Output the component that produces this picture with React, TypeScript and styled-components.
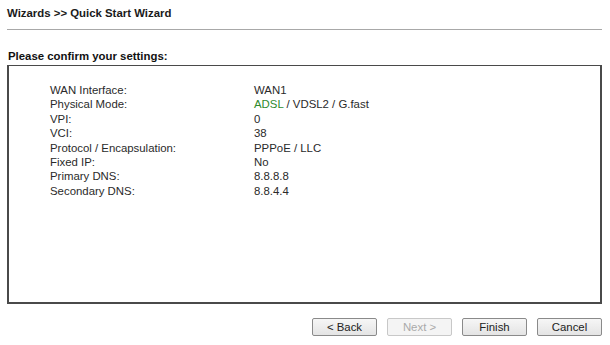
import { Fragment } from 'react'
import styled, { createGlobalStyle } from 'styled-components'

const GlobalStyle = createGlobalStyle`
  html,
  body {
    margin: 0;
    padding: 0;
    background: #fff;
  }
  body {
    font-family: 'Liberation Sans', Arial, sans-serif;
    color: #000;
  }
`

const Page = styled.div`
  width: 610px;
  height: 345px;
  padding: 5px 8px 0 7px;
  box-sizing: border-box;
  display: flex;
  flex-direction: column;
`

const Title = styled.h1`
  margin: 0;
  font-size: 11.4px;
  font-weight: bold;
  line-height: 16px;
  color: #1a1a1a;
`

const Rule = styled.hr`
  margin: 8px 0 0;
  border: 0;
  border-top: 1px solid #a8a8a8;
  height: 0;
`

const Heading = styled.h2`
  margin: 19px 0 2px 1px;
  font-size: 11.4px;
  font-weight: bold;
  line-height: 14px;
  color: #111;
`

const Panel = styled.div`
  height: 239px;
  box-sizing: border-box;
  border: 2px solid #4a4a4a;
  border-top-width: 1px;
  padding: 17px 0 0 41px;
`

const SettingsTable = styled.div`
  display: grid;
  grid-template-columns: 204px 1fr;
  grid-auto-rows: 14.4px;
  font-size: 11.4px;
  line-height: 14px;
  color: #2a2a2a;
`

const Value = styled.span<{ $green?: boolean }>`
  color: ${(p) => (p.$green ? '#2e8b2e' : '#2a2a2a')};
`

const Buttons = styled.div`
  display: flex;
  justify-content: flex-end;
  gap: 10px;
  margin-top: 14px;
`

const Button = styled.button`
  width: 65px;
  height: 18px;
  padding: 0;
  box-sizing: border-box;
  border: 1px solid #8a8a8a;
  border-radius: 2px;
  background: linear-gradient(#f6f6f6, #e4e4e4);
  font-family: 'Liberation Sans', Arial, sans-serif;
  font-size: 11.4px;
  color: #222;

  &:disabled {
    border-color: #c8c8c8;
    background: #f4f4f4;
    color: #aaa;
  }
`

const rows: [string, string][] = [
  ['WAN Interface:', 'WAN1'],
  ['Physical Mode:', ''],
  ['VPI:', '0'],
  ['VCI:', '38'],
  ['Protocol / Encapsulation:', 'PPPoE / LLC'],
  ['Fixed IP:', 'No'],
  ['Primary DNS:', '8.8.8.8'],
  ['Secondary DNS:', '8.8.4.4'],
]

export default function App() {
  return (
    <>
      <GlobalStyle />
      <Page>
        <Title>Wizards &gt;&gt; Quick Start Wizard</Title>
        <Rule />
        <Heading>Please confirm your settings:</Heading>
        <Panel>
          <SettingsTable>
            {rows.map(([label, value]) => (
              <Fragment key={label}>
                <span>{label}</span>
                {label === 'Physical Mode:' ? (
                  <span>
                    <Value $green>ADSL</Value> / VDSL2 / G.fast
                  </span>
                ) : (
                  <Value>{value}</Value>
                )}
              </Fragment>
            ))}
          </SettingsTable>
        </Panel>
        <Buttons>
          <Button>&lt; Back</Button>
          <Button disabled>Next &gt;</Button>
          <Button>Finish</Button>
          <Button>Cancel</Button>
        </Buttons>
      </Page>
    </>
  )
}
